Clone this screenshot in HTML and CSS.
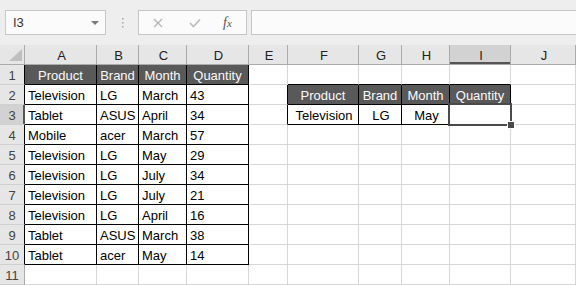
FILE: index.html
```html
<!DOCTYPE html>
<html>
<head>
  <title>Lookup sheet</title>
  <link rel="stylesheet" href="styles.css">
</head>
<body>
  <div class="topbar">
    <div class="namebox">
      <span>I3</span>
      <svg class="drop" width="8" height="5" viewBox="0 0 8 5"><polygon points="0,0 8,0 4,4" fill="#7a7a7a"/></svg>
    </div>
    <div class="grip">
      <svg width="3" height="12" viewBox="0 0 3 12"><rect x="1" y="1" width="1.5" height="1.5" fill="#a8a8a8"/><rect x="1" y="5" width="1.5" height="1.5" fill="#a8a8a8"/><rect x="1" y="9" width="1.5" height="1.5" fill="#a8a8a8"/></svg>
    </div>
    <div class="fnbox">
      <svg class="fn-x" width="10" height="10" viewBox="0 0 10 10"><path d="M1 1 L9 9 M9 1 L1 9" stroke="#b4b4b4" stroke-width="1.3" fill="none"/></svg>
      <svg class="fn-ok" width="12" height="10" viewBox="0 0 12 10"><path d="M1 5 L4.5 8.5 L11 1.5" stroke="#bcbcbc" stroke-width="1.6" fill="none"/></svg>
      <span class="fn-fx"><i>f</i><i class="x">x</i></span>
    </div>
    <div class="formula"></div>
  </div>

  <div class="sheet">
    <div class="c corner"><span class="tri"></span></div>
    <div class="c ch">A</div><div class="c ch">B</div><div class="c ch">C</div><div class="c ch">D</div><div class="c ch">E</div>
    <div class="c ch">F</div><div class="c ch">G</div><div class="c ch">H</div><div class="c ch sel">I</div><div class="c ch">J</div>

    <div class="c rh el">1</div>
    <div class="c hd">Product</div><div class="c hd">Brand</div><div class="c hd">Month</div><div class="c hd">Quantity</div>
    <div class="c"></div><div class="c et"></div><div class="c et"></div><div class="c et"></div><div class="c et"></div><div class="c"></div>

    <div class="c rh el">2</div>
    <div class="c td">Television</div><div class="c td">LG</div><div class="c td">March</div><div class="c td">43</div>
    <div class="c el"></div><div class="c hd">Product</div><div class="c hd">Brand</div><div class="c hd">Month</div><div class="c hd">Quantity</div><div class="c"></div>

    <div class="c rh sel">3</div>
    <div class="c td">Tablet</div><div class="c td">ASUS</div><div class="c td">April</div><div class="c td">34</div>
    <div class="c el"></div><div class="c td ctr">Television</div><div class="c td ctr">LG</div><div class="c td ctr">May</div><div class="c td cur"><span class="handle"></span></div><div class="c"></div>

    <div class="c rh el">4</div>
    <div class="c td">Mobile</div><div class="c td">acer</div><div class="c td">March</div><div class="c td">57</div>
    <div class="c"></div><div class="c"></div><div class="c"></div><div class="c"></div><div class="c"></div><div class="c"></div>

    <div class="c rh el">5</div>
    <div class="c td">Television</div><div class="c td">LG</div><div class="c td">May</div><div class="c td">29</div>
    <div class="c"></div><div class="c"></div><div class="c"></div><div class="c"></div><div class="c"></div><div class="c"></div>

    <div class="c rh el">6</div>
    <div class="c td">Television</div><div class="c td">LG</div><div class="c td">July</div><div class="c td">34</div>
    <div class="c"></div><div class="c"></div><div class="c"></div><div class="c"></div><div class="c"></div><div class="c"></div>

    <div class="c rh el">7</div>
    <div class="c td">Television</div><div class="c td">LG</div><div class="c td">July</div><div class="c td">21</div>
    <div class="c"></div><div class="c"></div><div class="c"></div><div class="c"></div><div class="c"></div><div class="c"></div>

    <div class="c rh el">8</div>
    <div class="c td">Television</div><div class="c td">LG</div><div class="c td">April</div><div class="c td">16</div>
    <div class="c"></div><div class="c"></div><div class="c"></div><div class="c"></div><div class="c"></div><div class="c"></div>

    <div class="c rh el">9</div>
    <div class="c td">Tablet</div><div class="c td">ASUS</div><div class="c td">March</div><div class="c td">38</div>
    <div class="c"></div><div class="c"></div><div class="c"></div><div class="c"></div><div class="c"></div><div class="c"></div>

    <div class="c rh el">10</div>
    <div class="c td">Tablet</div><div class="c td">acer</div><div class="c td">May</div><div class="c td">14</div>
    <div class="c"></div><div class="c"></div><div class="c"></div><div class="c"></div><div class="c"></div><div class="c"></div>

    <div class="c rh">11</div>
    <div class="c"></div><div class="c"></div><div class="c"></div><div class="c"></div>
    <div class="c"></div><div class="c"></div><div class="c"></div><div class="c"></div><div class="c"></div><div class="c"></div>
  </div>
</body>
</html>
```

FILE: styles.css
```css
body {
  margin: 0;
  font-family: "Liberation Sans", Arial, sans-serif;
  font-size: 13px;
  background: #fff;
  overflow: hidden;
}
.topbar {
  display: flex;
  height: 25px;
  padding: 10px 0 10px 5px;
  background: #eeeeee;
}
.namebox {
  width: 101px;
  box-sizing: border-box;
  border: 1px solid #c6c6c6;
  background: #fbfbfb;
  display: flex;
  align-items: center;
  justify-content: space-between;
  padding: 0 6px 0 7px;
  color: #333;
}
.drop {
  margin-top: 1px;
}
.grip {
  width: 31px;
  display: flex;
  align-items: center;
  justify-content: center;
  padding-left: 1px;
}
.fnbox {
  width: 109px;
  box-sizing: border-box;
  border: 1px solid #c6c6c6;
  background: #fbfbfb;
  display: flex;
  align-items: center;
  padding-left: 14px;
}
.fn-ok {
  margin-left: 26px;
}
.fn-fx {
  margin-left: 22px;
  font-family: "Liberation Serif", "Times New Roman", serif;
  font-size: 14px;
  color: #555;
}
.fn-fx .x {
  font-size: 11px;
}
.formula {
  flex: 1;
  margin-left: 4px;
  margin-right: -1px;
  border: 1px solid #c6c6c6;
  background: #fbfbfb;
}
.sheet {
  display: grid;
  grid-template-columns: 25px 72px 42px 48px 62px 39px 71px 43px 48px 61px 65px;
  grid-auto-rows: 20px;
}
.c {
  box-sizing: border-box;
  border-right: 1px solid #d6d6d6;
  border-bottom: 1px solid #d6d6d6;
  padding: 0 1px 0 3px;
  line-height: 22px;
  white-space: nowrap;
  overflow: hidden;
  color: #000;
}
.corner {
  background: #e6e6e6;
  border-right-color: #ababab;
  border-bottom-color: #ababab;
  position: relative;
}
.tri {
  position: absolute;
  right: 2px;
  bottom: 3px;
  width: 0;
  height: 0;
  border-left: 13px solid transparent;
  border-bottom: 12px solid #bfbfbf;
}
.ch {
  background: #e6e6e6;
  border-right-color: #ababab;
  border-bottom-color: #ababab;
  text-align: center;
  color: #222;
}
.ch.sel {
  background: #d2d2d2;
  box-shadow: inset 0 -2px #555;
}
.rh {
  background: #e6e6e6;
  border-right-color: #ababab;
  border-bottom-color: #d0d0d0;
  text-align: center;
  padding: 0;
  color: #444;
}
.rh.sel {
  background: #d2d2d2;
  border-right-color: #555;
  box-shadow: inset -1px 0 #555;
}
.hd {
  background: #595959;
  color: #fafafa;
  text-align: center;
  padding: 0;
  border-right-color: #000;
  border-bottom-color: #000;
}
.td {
  border-right-color: #000;
  border-bottom-color: #000;
}
.ctr {
  text-align: center;
}
.el {
  border-right-color: #000;
}
.et {
  border-bottom-color: #000;
}
.cur {
  position: relative;
  overflow: visible;
}
.cur::after {
  content: "";
  position: absolute;
  left: -2px;
  top: -2px;
  right: -2px;
  bottom: -2px;
  border: 2px solid #4a4a4a;
}
.handle {
  position: absolute;
  right: -5px;
  bottom: -5px;
  width: 6px;
  height: 6px;
  background: #4a4a4a;
  border: 1px solid #fff;
  z-index: 1;
}
```
